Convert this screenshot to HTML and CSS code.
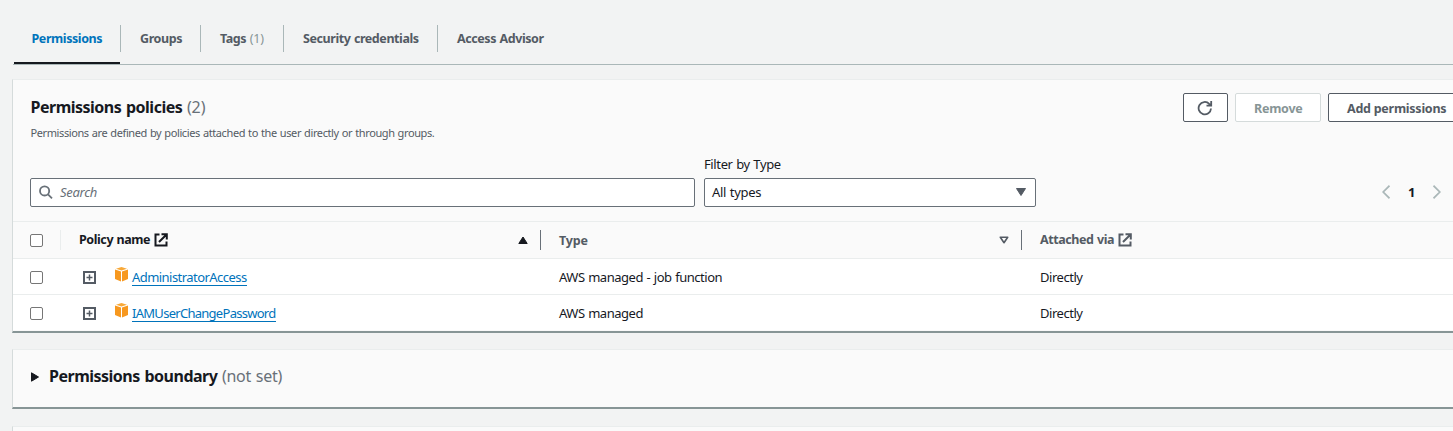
FILE: index.html
```html
<!DOCTYPE html>
<html lang="en">
<head>
<meta charset="utf-8">
<title>Permissions</title>
<link rel="stylesheet" href="styles.css">
</head>
<body>
<svg class="defs" width="0" height="0">
  <symbol id="external" viewBox="0 0 14 14"><path d="M5.500 1.500H1.500V12.500H12.500V8.500M7.500 1.200H12.800V6.500M12.300 1.700L5 9" fill="none" stroke="currentColor" stroke-width="2"/></symbol>
  <symbol id="expand" viewBox="0 0 13 13"><path d="M1 1H12V12H1Z" fill="none" stroke="currentColor" stroke-width="2"/><path d="M6.500 3.500V9.500M3.500 6.500H9.500" fill="none" stroke="currentColor" stroke-width="1.500"/></symbol>
  <symbol id="cube" viewBox="0 0 13 15"><path d="M6.500 0L12 1.800L6.500 3.600L1 1.800Z" fill="#f8a837"/><path d="M0 2.600L6 4.500V14.500L0 12Z" fill="#f7981f"/><path d="M13 2.600L7 4.500V14.500L13 12Z" fill="#f7981f"/></symbol>
</svg>
<main class="page">
  <nav class="tabs">
    <a class="tab active"><span>Permissions</span></a>
    <a class="tab groups"><span>Groups</span></a>
    <a class="tab tags"><span>Tags <i class="count">(1)</i></span></a>
    <a class="tab security"><span>Security credentials</span></a>
    <a class="tab"><span>Access Advisor</span></a>
  </nav>

  <section class="card policies">
    <header class="card-head">
      <div>
        <h2>Permissions policies <span class="muted">(2)</span></h2>
        <p class="description">Permissions are defined by policies attached to the user directly or through groups.</p>
      </div>
      <div class="actions">
        <button class="btn icon-btn"><svg width="16" height="16" viewBox="0 0 16 16" fill="none" stroke="currentColor" stroke-width="1.800"><path d="M14 8.500A6.200 6.200 0 1 1 12.200 3.800L14 5.500M14.200 1V5.600H9.500"/></svg></button>
        <button class="btn disabled">Remove</button>
        <button class="btn add">Add permissions</button>
      </div>
    </header>
    <div class="filters">
      <div class="search">
        <svg width="14" height="14" viewBox="0 0 14 14" fill="none" stroke="currentColor" stroke-width="1.800"><circle cx="5.600" cy="5.900" r="4.600"/><path d="M9 9.300L13 13.300"/></svg>
        <span>Search</span>
      </div>
      <div class="filter">
        <label>Filter by Type</label>
        <div class="select"><span>All types</span><svg width="10" height="8" viewBox="0 0 10 8"><path d="M.5 .5H9.500L5 7.500Z" fill="#545b64" stroke="#545b64" stroke-linejoin="round"/></svg></div>
      </div>
      <div class="pager">
        <svg width="8" height="14" viewBox="0 0 8 14"><path d="M7.500 .7L1.200 7L7.500 13.300"/></svg>
        <b>1</b>
        <svg width="8" height="14" viewBox="0 0 8 14"><path d="M.5 .7L6.800 7L.5 13.300"/></svg>
      </div>
    </div>
    <div class="row head">
      <div class="check"><i class="box"></i></div>
      <div class="name sorted"><span>Policy name</span><svg class="ext" width="14" height="14"><use href="#external"/></svg><svg class="sort" width="10" height="8" viewBox="0 0 10 8"><path d="M.8 7.500H9.200L5 1Z" fill="#16191f" stroke="#16191f" stroke-linejoin="round"/></svg></div>
      <div class="type"><span class="type-label">Type</span><svg class="sort" width="10" height="8" viewBox="0 0 10 8"><path d="M1.300 1.200H8.700L5 6.700Z" fill="none" stroke="#545b64" stroke-width="1.600" stroke-linejoin="round"/></svg></div>
      <div class="via"><span>Attached via</span><svg class="ext" width="14" height="14"><use href="#external"/></svg></div>
    </div>
    <div class="row">
      <div class="check"><i class="box"></i></div>
      <div class="name"><svg class="plus" width="13" height="13"><use href="#expand"/></svg><svg class="cube" width="13" height="15"><use href="#cube"/></svg><a class="link">AdministratorAccess</a></div>
      <div class="type"><span>AWS managed - job function</span></div>
      <div class="via"><span>Directly</span></div>
    </div>
    <div class="row">
      <div class="check"><i class="box"></i></div>
      <div class="name"><svg class="plus" width="13" height="13"><use href="#expand"/></svg><svg class="cube" width="13" height="15"><use href="#cube"/></svg><a class="link password">IAMUserChangePassword</a></div>
      <div class="type"><span>AWS managed</span></div>
      <div class="via"><span>Directly</span></div>
    </div>
  </section>

  <section class="card boundary">
    <svg width="8" height="10" viewBox="0 0 8 10"><path d="M.5 .8V9.200L7.500 5Z" fill="#16191f" stroke="#16191f" stroke-linejoin="round"/></svg>
    <h2>Permissions boundary <span class="muted">(not set)</span></h2>
  </section>
  <section class="card next"></section>
</main>
</body>
</html>
```
FILE: styles.css
```css
* { box-sizing: border-box; }
html, body { margin: 0; height: 431px; overflow: hidden; }
body { background: #f2f3f3; color: #16191f; font: 13px/18px "Noto Sans", sans-serif; letter-spacing: -.46px; word-spacing: .6px; }
.defs { display: block; }
svg { display: block; flex: none; }
i { font-style: normal; }
.page { width: 1484px; padding-left: 12px; }
.tabs { display: flex; height: 65px; padding: 25px 0 0 1px; margin-left: 1px; border-bottom: 1px solid #aab7b8; }
.tab { height: 39px; color: #545b64; font-size: 12.5px; font-weight: 700; letter-spacing: -.42px; white-space: nowrap; }
.tab span { display: block; height: 27px; line-height: 27px; padding-left: 19px; border-right: 1px solid #aab7b8; }
.tab:last-child span { border: 0; }
.tab.active { width: 107px; color: #0073bb; background: linear-gradient(#16191f, #16191f) 0 100% / 106px 2px no-repeat; }
.tab.active span { padding-left: 17.5px; }
.groups { width: 80px; }
.tags { width: 83px; }
.security { width: 154px; }
.tab .count { font-weight: 400; color: #879596; letter-spacing: -.1px; }
.card { background: #fafafa; border-left: 1px solid #d5dbdb; border-top: 1px solid #eaeded; border-bottom: 2px solid #879596; }
.policies { height: 254px; margin-top: 14px; }
.card-head { display: flex; justify-content: space-between; height: 78px; padding: 14px 18px 0 17.5px; }
h2 { margin: 0; font-size: 16px; line-height: 26px; font-weight: 700; letter-spacing: -.5px; word-spacing: 1px; white-space: nowrap; }
.muted { font-weight: 400; color: #687078; letter-spacing: -.1px; }
.description { margin: 5px 0 0; font-size: 11px; line-height: 16px; letter-spacing: -.4px; color: #545b64; }
.actions { display: flex; gap: 7px; margin-top: -1px; }
.btn { height: 29px; padding: 2px 18px 0; border: 1px solid #545b64; border-radius: 2px; background: #fff; color: #545b64; font: inherit; font-size: 12.5px; font-weight: 700; letter-spacing: -.25px; text-align: left; white-space: nowrap; }
.icon-btn { width: 45px; padding: 0 13px; }
.disabled { width: 86px; border-color: #d5dbdb; color: #879596; }
.add { width: 138px; }
.filters { display: flex; align-items: flex-end; height: 49px; padding: 0 43px 0 17px; margin-bottom: 14px; }
.search, .select { display: flex; align-items: center; height: 29px; padding-bottom: 1px; border: 1px solid #687078; border-radius: 2px; background: #fff; }
.search { width: 665px; padding-left: 8px; gap: 7px; color: #687078; font-style: italic; letter-spacing: -.3px; }
.filter { width: 332px; margin-left: 9px; }
.filter label { display: block; margin-bottom: 5px; letter-spacing: -.38px; }
.select { justify-content: space-between; padding: 0 9px 1px 7px; letter-spacing: -.3px; }
.pager { display: flex; align-items: center; height: 29px; padding-bottom: 1px; margin-left: auto; gap: 18px; }
.pager path { fill: none; stroke: #aab7b8; stroke-width: 1.700; }
.row { display: grid; grid-template-columns: 48px 480px 481px 1fr; height: 36px; align-items: center; background: #fff; }
.row + .row { border-top: 1px solid #eaeded; }
.row.head { height: 37px; background: #fafafa; border-top: 1px solid #eaeded; color: #545b64; font-size: 12.5px; font-weight: 700; letter-spacing: -.42px; }
.row > div { display: flex; align-items: center; height: 20px; }
.check { padding-left: 17px; }
.head .check { border-right: 1px solid #eaeded; }
.box { width: 13px; height: 13px; border: 1px solid #767676; border-radius: 2px; background: #fff; }
.row:not(.head) .box { margin-top: 1px; }
.name { padding-left: 22px; }
.type, .via { padding-left: 18px; }
.head .name, .head .type { padding-right: 12px; border-right: 1px solid #687078; }
.head .name { padding-left: 18px; }
.sorted { color: #16191f; }
.type-label { margin-top: 2px; letter-spacing: -.2px; }
.ext { margin-left: 4px; }
.sort { margin-left: auto; }
.plus { margin-top: 1px; color: #545b64; }
.cube { margin: -4px 4px 0 19px; }
.link { height: 17px; margin-top: 2px; line-height: 16px; color: #0073bb; border-bottom: 1px solid #0073bb; letter-spacing: -.55px; }
.password { letter-spacing: -.72px; }
.boundary { display: flex; align-items: center; gap: 10px; height: 60px; margin-top: 16px; padding: 0 0 4px 18px; }
.boundary h2 { margin-top: -2px; }
.boundary .muted { letter-spacing: -.3px; }
.next { height: 5px; margin-top: 17px; border-bottom: 0; }
```
